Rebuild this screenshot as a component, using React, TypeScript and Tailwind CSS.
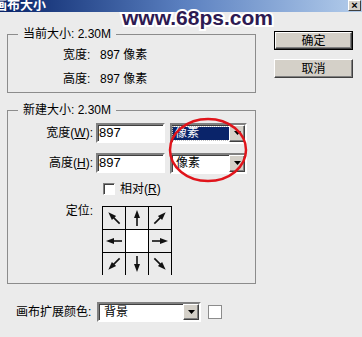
import React from 'react';

const FONT = "font-['Liberation_Sans','Noto_Sans_CJK_SC',sans-serif]";

// directions for the anchor grid, in degrees from "up"
const ANCHORS: (number | null)[] = [-45, 0, 45, -90, null, 90, -135, 180, 135];

function Arrow({ angle }: { angle: number }) {
  return (
    <svg width="22" height="22" viewBox="0 0 22 22" aria-hidden>
      <g transform={`rotate(${angle} 11 11)`}>
        <line x1="11" y1="19" x2="11" y2="8" stroke="#111" strokeWidth="1.6" />
        <polygon points="11,3 8,11 14,11" fill="#111" />
      </g>
    </svg>
  );
}

function DropArrow({ w = 16 }: { w?: number }) {
  return (
    <div
      className="flex h-full items-center justify-center border border-t-white border-l-white border-b-[#404040] border-r-[#404040] bg-[#d4d0c8] shadow-[inset_-1px_-1px_0_#808080]"
      style={{ width: w }}
    >
      <svg width="7" height="4" viewBox="0 0 7 4" aria-hidden>
        <polygon points="0,0 7,0 3.5,4" fill="#000" />
      </svg>
    </div>
  );
}

function Sunken({ className = '', children }: { className?: string; children?: React.ReactNode }) {
  return (
    <div
      className={`flex items-center border-2 border-t-[#808080] border-l-[#808080] border-b-white border-r-white bg-white shadow-[inset_1px_1px_0_#404040] ${className}`}
    >
      {children}
    </div>
  );
}

function WinButton({ label, isDefault }: { label: string; isDefault?: boolean }) {
  return (
    <div className={`h-[19px] w-[79px] ${isDefault ? 'border border-black' : ''}`}>
      <div className="flex h-full w-full items-center justify-center border border-t-white border-l-white border-b-[#404040] border-r-[#404040] bg-[#d4d0c8] text-[12px] leading-none shadow-[inset_-1px_-1px_0_#808080]">
        {label}
      </div>
    </div>
  );
}

export default function App() {
  return (
    <div className={`relative h-[337px] w-[362px] overflow-hidden bg-[#ebebeb] text-[12px] text-black ${FONT}`}>
      {/* title bar */}
      <div className="relative h-[12px] overflow-hidden bg-gradient-to-r from-[#0a246a] via-[#5a7fbf] to-[#b4cdeb]">
        <span className="absolute left-[-6px] top-[-3px] text-[13px] font-bold leading-[16px] text-white">画布大小</span>
        <div className="absolute right-[1px] top-0 flex h-[11px] w-[13px] items-center justify-center border border-t-white border-l-white border-b-[#404040] border-r-[#404040] bg-[#d4d0c8] text-[11px] font-bold leading-none">
          ×
        </div>
      </div>

      <div className="flex pl-[7px]">
        <div className="flex w-[249px] flex-col">
          <fieldset className="mt-[15px] border border-[#8c8c8c] pb-[6px]">
            <legend className="ml-[10px] px-[5px] leading-[14px]">当前大小: 2.30M</legend>
            <div className="ml-[55px] mt-[7px] flex leading-[14px]">
              <span className="w-[37px]">宽度:</span>
              <span>897 像素</span>
            </div>
            <div className="ml-[55px] mt-[10px] flex leading-[14px]">
              <span className="w-[37px]">高度:</span>
              <span>897 像素</span>
            </div>
          </fieldset>

          <fieldset className="mt-[10px] border border-[#8c8c8c] pb-[8px]">
            <legend className="ml-[10px] px-[5px] leading-[14px]">新建大小: 2.30M</legend>
            <div className="mt-[6px] flex h-[20px] items-center">
              <span className="w-[85px] text-right">
                宽度(<span className="underline">W</span>):
              </span>
              <Sunken className="ml-[3px] h-[20px] w-[69px] pl-[1px] text-[13px]">897</Sunken>
              <Sunken className="ml-[5px] h-[21px] w-[77px] justify-between">
                <div className="ml-[1px] flex h-[13px] w-[56px] items-center bg-[#0a246a] pl-[2px] text-white outline-1 outline-dotted outline-[#c0c0c0]">
                  像素
                </div>
                <DropArrow />
              </Sunken>
            </div>
            <div className="mt-[10px] flex h-[20px] items-center">
              <span className="w-[85px] text-right">
                高度(<span className="underline">H</span>):
              </span>
              <Sunken className="ml-[3px] h-[20px] w-[69px] pl-[1px] text-[13px]">897</Sunken>
              <Sunken className="ml-[5px] h-[21px] w-[77px] justify-between">
                <span className="pl-[4px]">像素</span>
                <DropArrow />
              </Sunken>
            </div>
            <div className="mt-[10px] flex h-[12px] items-center">
              <div className="ml-[95px] h-[12px] w-[12px] border border-t-[#808080] border-l-[#808080] border-b-white border-r-white bg-white shadow-[inset_1px_1px_0_#404040]" />
              <span className="ml-[5px] leading-[12px]">
                相对(<span className="underline">R</span>)
              </span>
            </div>
            <div className="mt-[11px] flex">
              <span className="mt-[-2px] w-[85px] text-right leading-[14px]">定位:</span>
              <div className="ml-[9px] grid h-[69px] w-[70px] grid-cols-3 gap-px border border-black bg-black">
                {ANCHORS.map((a, i) => (
                  <div
                    key={i}
                    className={`flex items-center justify-center ${a === null ? 'bg-white' : 'bg-[#ebebeb]'}`}
                  >
                    {a !== null ? <Arrow angle={a} /> : null}
                  </div>
                ))}
              </div>
            </div>
          </fieldset>

          <div className="mt-[18px] flex h-[20px] items-center">
            <span className="ml-[9px] w-[81px]">画布扩展颜色:</span>
            <Sunken className="h-[20px] w-[104px] justify-between">
              <span className="pl-[5px]">背景</span>
              <DropArrow />
            </Sunken>
            <div className="ml-[7px] h-[14px] w-[14px] border border-[#8c8c8c] bg-white" />
          </div>
        </div>

        <div className="ml-[18px] flex flex-col gap-[9px] pt-[19px]">
          <WinButton label="确定" isDefault />
          <WinButton label="取消" />
        </div>
      </div>

      {/* watermark */}
      <span className="pointer-events-none absolute left-[122px] top-[4px] font-['Liberation_Sans',sans-serif] text-[21px] font-bold leading-[28px] text-[#2e1a52] [-webkit-text-stroke:4px_white] [paint-order:stroke_fill]">
        www.68ps.com
      </span>

      {/* red marker */}
      <svg className="pointer-events-none absolute left-0 top-0" width="362" height="337" aria-hidden>
        <ellipse cx="208" cy="150" rx="38" ry="31" fill="none" stroke="#e0141b" strokeWidth="2.5" />
      </svg>
    </div>
  );
}
